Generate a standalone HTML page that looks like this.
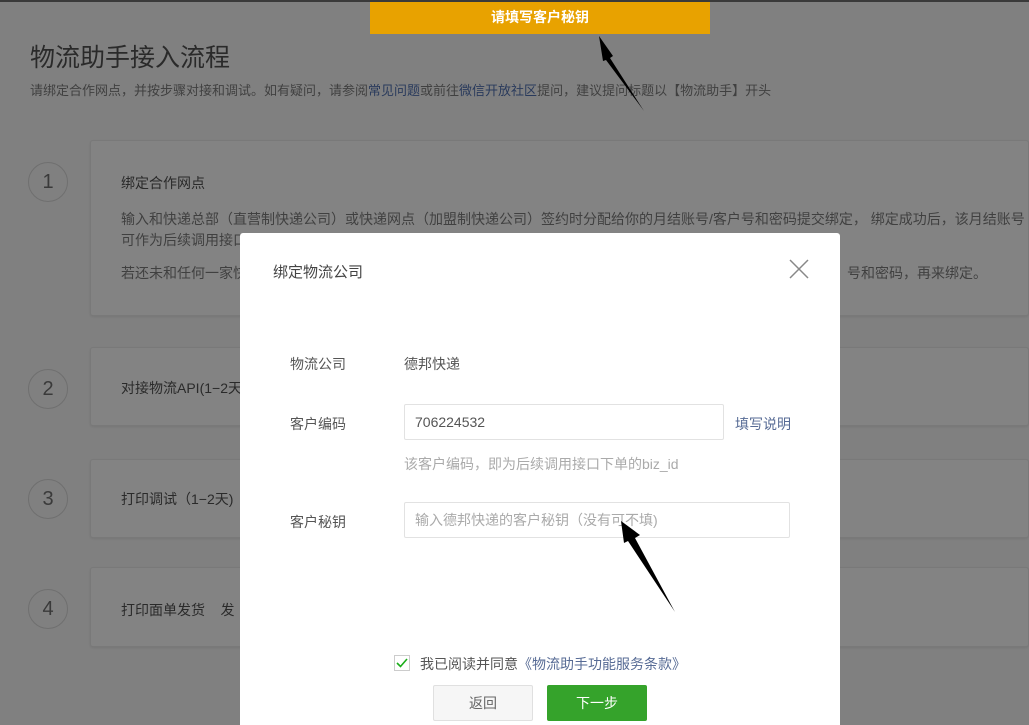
<!DOCTYPE html>
<html><head><meta charset="utf-8"><style>
*{margin:0;padding:0;box-sizing:border-box}
body{width:1029px;height:725px;overflow:hidden;background:#808080;font-family:"Liberation Sans","Noto Sans CJK SC",sans-serif;position:relative;color:#2e2e2e}
.abs{position:absolute}
.card{position:absolute;left:90px;right:0;background:#838383;border:1px solid #797979;border-radius:3px;box-shadow:0 1px 2px rgba(0,0,0,.08)}
.circ{position:absolute;left:28px;width:40px;height:40px;border:1px solid #6f6f6f;border-radius:50%;color:#3a3a3a;font-size:20px;text-align:center;line-height:38px}
.t{font-size:14px;color:#2a2a2a}
.g{font-size:14px;color:#404040}
.m{position:absolute;left:240px;top:233px;width:600px;height:492px;background:#fff;border-radius:3px 3px 0 0}
.m .lbl{position:absolute;left:50px;font-size:14px;color:#555}
.inp{position:absolute;height:36px;border:1px solid #e2e2e2;border-radius:2px;font-size:14px;padding-left:10px;line-height:34px}
</style></head><body>
<div class="abs" style="left:0;top:0;width:1029px;height:2px;background:#3a3a3a"></div>
<div class="abs" style="left:370px;top:2px;width:340px;height:32px;background:#e8a200;color:#fff;font-size:14px;font-weight:bold;text-align:center;line-height:31px">请填写客户秘钥</div>
<div class="abs" style="left:30px;top:38px;font-size:25px;color:#2a2a2a">物流助手接入流程</div>
<div class="abs" style="left:30px;top:80px;font-size:13px;color:#404040">请绑定合作网点，并按步骤对接和调试。如有疑问，请参阅<span style="color:#293a5c">常见问题</span>或前往<span style="color:#293a5c">微信开放社区</span>提问，建议提问标题以【物流助手】开头</div>

<div class="circ" style="top:162px">1</div>
<div class="card" style="top:140px;height:176px">
<div class="abs t" style="left:30px;top:32px">绑定合作网点</div>
<div class="abs g" style="left:30px;top:68px;white-space:nowrap;line-height:21px">输入和快递总部（直营制快递公司）或快递网点（加盟制快递公司）签约时分配给你的月结账号/客户号和密码提交绑定， 绑定成功后，该月结账号<br>可作为后续调用接口</div>
<div class="abs g" style="left:30px;top:122px;white-space:nowrap">若还未和任何一家快</div>
<div class="abs g" style="left:756px;top:122px;white-space:nowrap">号和密码，再来绑定。</div>
</div>
<div class="circ" style="top:369px">2</div>
<div class="card" style="top:347px;height:79px"><div class="abs t" style="left:30px;top:30px">对接物流API(1−2天</div></div>
<div class="circ" style="top:479px">3</div>
<div class="card" style="top:459px;height:79px"><div class="abs t" style="left:30px;top:29px">打印调试（1−2天)</div></div>
<div class="circ" style="top:589px">4</div>
<div class="card" style="top:567px;height:80px"><div class="abs t" style="left:30px;top:32px">打印面单发货 &nbsp;&nbsp;&nbsp;发</div></div>

<div class="m">
<div class="abs" style="left:33px;top:28px;font-size:15px;color:#444">绑定物流公司</div>
<svg class="abs" style="left:549px;top:26px" width="20" height="20"><path d="M1 1L19 19M19 1L1 19" stroke="#888" stroke-width="1.5"/></svg>
<div class="lbl" style="top:121px">物流公司</div>
<div class="abs" style="left:164px;top:121px;font-size:14px;color:#555">德邦快递</div>
<div class="lbl" style="top:181px">客户编码</div>
<div class="inp" style="left:164px;top:171px;width:320px;color:#555">706224532</div>
<div class="abs" style="left:495px;top:181px;font-size:14px;color:#576b95">填写说明</div>
<div class="abs" style="left:164px;top:221px;font-size:14px;color:#aaa">该客户编码，即为后续调用接口下单的biz_id</div>
<div class="lbl" style="top:279px">客户秘钥</div>
<div class="inp" style="left:164px;top:269px;width:386px;color:#aaa">输入德邦快递的客户秘钥（没有可不填)</div>
<div class="abs" style="left:154px;top:422px;width:16px;height:16px;border:1px solid #ccc;background:#fff"></div>
<svg class="abs" style="left:156px;top:425px" width="12" height="10"><path d="M1 5L4.5 8.5L11 1" stroke="#1aad19" stroke-width="1.6" fill="none"/></svg>
<div class="abs" style="left:180px;top:421px;font-size:14px;color:#555">我已阅读并同意<span style="color:#576b95">《物流助手功能服务条款》</span></div>
<div class="abs" style="left:193px;top:452px;width:100px;height:36px;border:1px solid #e0e0e0;background:#f6f6f6;border-radius:2px;text-align:center;line-height:34px;font-size:14px;color:#666">返回</div>
<div class="abs" style="left:307px;top:452px;width:100px;height:36px;background:#35a32b;border-radius:2px;text-align:center;line-height:36px;font-size:14px;color:#fff">下一步</div>
</div>

<svg class="abs" style="left:0;top:0" width="1029" height="725">
<path d="M599 36L613 56L610 58L644 111L606 60L603 61Z" fill="#000"/>
<path d="M621 521L640 535L635 538L675 612L628 541L624 543Z" fill="#000"/>
</svg>
</body></html>
